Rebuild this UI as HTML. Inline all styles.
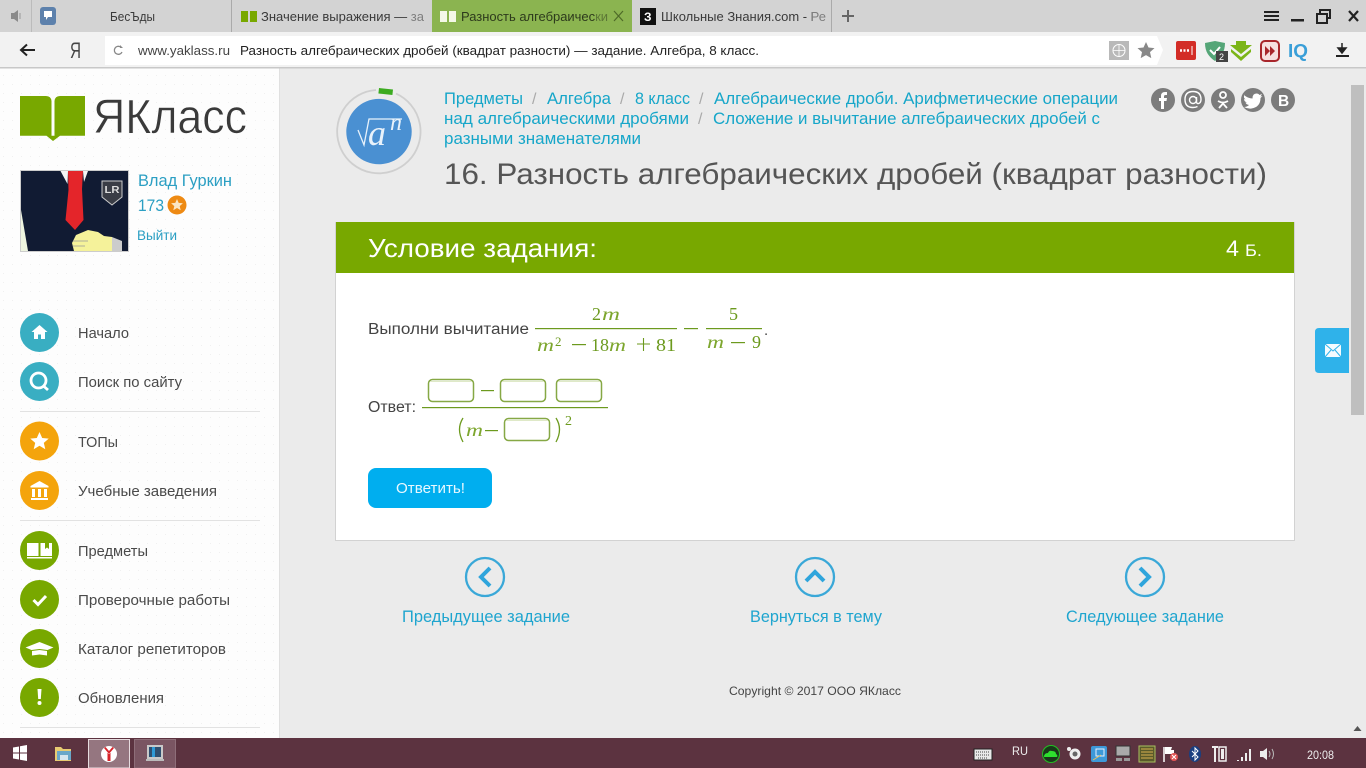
<!DOCTYPE html>
<html lang="ru"><head><meta charset="utf-8"><title>Разность алгебраических дробей</title>
<style>
html,body{margin:0;padding:0;width:1366px;height:768px;overflow:hidden;background:#ebebeb}
svg{display:block;position:absolute;left:0;top:0}
text{font-family:"Liberation Sans",sans-serif;white-space:pre}
.nav{font-size:14.5px;fill:#4a4a4a}
.bc{font-size:17px;fill:#16a6c9}
.tab{font-size:13px;fill:#3a3a3a}
.m{font-family:"Liberation Serif",serif;fill:#6c9a1e;font-size:18px}
.mi{font-family:"Liberation Serif",serif;fill:#7da62e;font-size:18px;font-style:italic}
.lnk{font-size:16.5px;fill:#1fa5cf}
</style></head><body>
<svg width="1366" height="768" viewBox="0 0 1366 768" xmlns="http://www.w3.org/2000/svg">
<defs>
<pattern id="dots" width="9" height="9" patternUnits="userSpaceOnUse"><rect width="9" height="9" fill="#fdfdfd"/><rect x="3" y="3" width="1" height="1" fill="#f0f0f0"/></pattern>
</defs>

<!-- page -->
<rect x="0" y="68" width="1366" height="670" fill="#ebebeb"/>
<rect x="0" y="68" width="279" height="670" fill="url(#dots)"/>
<rect x="279" y="68" width="1" height="670" fill="#e0e0e0"/>

<!-- tab bar -->
<rect x="0" y="0" width="1366" height="32" fill="#d3d3d3"/>
<path d="M11 13h3l4-3v12l-4-3h-3z" fill="#8a8a8a"/><path d="M20 13v6" stroke="#999" stroke-width="1"/>
<rect x="31" y="0" width="1" height="32" fill="#bbb"/>
<rect x="40" y="7" width="16" height="18" rx="3" fill="#5d81ac"/><path d="M44 11h8v6h-4l-2 3v-3h-2z" fill="#fff"/>
<text class="tab" x="110" y="21" textLength="45" lengthAdjust="spacingAndGlyphs">БесЪды</text>
<rect x="231" y="0" width="1" height="32" fill="#aaa"/>
<path d="M241 11h7v11h-7zM250 11h7v11h-7z" fill="#78a800"/>
<text class="tab" x="261" y="21" textLength="163" lengthAdjust="spacingAndGlyphs">Значение выражения — за</text>
<rect x="408" y="4" width="24" height="24" fill="#d3d3d3" opacity=".45"/>
<rect x="432" y="0" width="200" height="32" fill="#8bb450"/>
<path d="M440 11h7v11h-7zM449 11h7v11h-7z" fill="#f4f8e8"/>
<text class="tab" x="461" y="21" textLength="147" lengthAdjust="spacingAndGlyphs" style="fill:#2d3a1c">Разность алгебраически</text>
<rect x="596" y="4" width="12" height="24" fill="#8bb450" opacity=".5"/>
<path d="M614 11l9 10M623 11l-9 10" stroke="#4e6a28" stroke-width="1.200"/>
<rect x="640" y="8" width="16" height="17" fill="#111"/><text x="644" y="21" style="font-size:12px;font-weight:bold;fill:#fff">З</text>
<text class="tab" x="661" y="21" textLength="165" lengthAdjust="spacingAndGlyphs">Школьные Знания.com - Ре</text>
<rect x="812" y="4" width="18" height="24" fill="#d3d3d3" opacity=".45"/>
<rect x="831" y="0" width="1" height="32" fill="#aaa"/>
<path d="M848 10v12M842 16h12" stroke="#666" stroke-width="2"/>
<path d="M1264 12h15M1264 16h15M1264 20h15" stroke="#222" stroke-width="2"/>
<rect x="1291" y="19" width="13" height="2.500" fill="#222"/>
<rect x="1317" y="14" width="10" height="9" fill="none" stroke="#222" stroke-width="2"/><path d="M1320 13v-3h10v8h-3" fill="none" stroke="#222" stroke-width="2"/>
<path d="M1349 11l9 10M1358 11l-9 10" stroke="#222" stroke-width="2.200"/>

<!-- toolbar -->
<rect x="0" y="32" width="1366" height="35" fill="#f2f2f2"/>
<rect x="0" y="67" width="1366" height="1.500" fill="#c8c8c8"/>
<path d="M22 50h13M27 44.500l-6 5.500 6 5.500" fill="none" stroke="#222" stroke-width="2"/>
<text x="70" y="58" style="font-size:22px;fill:#444" textLength="11" lengthAdjust="spacingAndGlyphs">Я</text>
<path d="M105 36h1052l6 14-6 15H105z" fill="#fff"/>
<path d="M122 52a4 4 0 1 1-1.400-5" fill="none" stroke="#888" stroke-width="1.300"/><path d="M120 45v3h3" fill="#888"/>
<text x="138" y="55" style="font-size:13px;fill:#444" textLength="92" lengthAdjust="spacingAndGlyphs">www.yaklass.ru</text>
<text x="240" y="55" style="font-size:13px;fill:#222" textLength="519" lengthAdjust="spacingAndGlyphs">Разность алгебраических дробей (квадрат разности) — задание. Алгебра, 8 класс.</text>
<rect x="1109" y="41" width="20" height="19" fill="#b9b9b9"/><circle cx="1119" cy="50.500" r="6" fill="none" stroke="#fff"/><path d="M1113 50.500h12M1119 44.500v12" stroke="#fff" stroke-width=".8"/>
<path d="M1146 42l2.500 5.500 6 .6-4.500 4 1.300 6-5.300-3-5.300 3 1.300-6-4.500-4 6-.6z" fill="#888"/>
<rect x="1176" y="41" width="20" height="19" rx="2" fill="#d32d27"/><path d="M1180 50.500h9" stroke="#fff" stroke-width="2.500" stroke-dasharray="2 1.500"/><path d="M1192 46v9" stroke="#fff"/>
<path d="M1205 43l10-2 10 2c0 9-4 14-10 18-6-4-10-9-10-18z" fill="#55a678"/><path d="M1210 50l4 4 6-7" fill="none" stroke="#fff" stroke-width="2"/>
<rect x="1216" y="51" width="12" height="11" fill="#444"/><text x="1219" y="60" style="font-size:9px;fill:#fff">2</text>
<path d="M1236 41h10v4h6l-11 9-11-9h6z M1231 49l10 8 10-8v3l-10 9-10-9z" fill="#7cb518"/>
<rect x="1261" y="41" width="18" height="20" rx="4" fill="#f6dfe0" stroke="#a8262c" stroke-width="2"/><path d="M1265 46l5 5-5 5zM1270 46l5 5-5 5z" fill="#a8262c"/>
<text x="1288" y="57" style="font-size:18px;font-weight:bold;fill:#3a9fd8" textLength="20" lengthAdjust="spacingAndGlyphs">IQ</text>
<path d="M1342 43v7M1338 48l4 5 4-5z" fill="#222" stroke="#222" stroke-width="1.500"/><rect x="1336" y="55" width="13" height="2" fill="#222"/>

<!-- logo -->
<path d="M20 96H46q5 0 5.500 5V135.700H20zM85 96H60q-5 0-5.500 5V135.700H85zM46.500 135.700H60L53 141z" fill="#78a800"/>
<text x="93" y="133" style="font-size:48px;fill:#3a3a3a;stroke:#fdfdfd;stroke-width:.6px" textLength="154" lengthAdjust="spacingAndGlyphs">ЯКласс</text>

<!-- avatar -->
<rect x="20.500" y="170.500" width="108" height="81" fill="#111b33" stroke="#ccc"/>
<path d="M60.500 171H68l-.5 13zM83 171h5l-4 11z" fill="#f4f4f4"/>
<path d="M68 171h15l-1 18 1.500 31-8.500 10-9.500-10 3-30z" fill="#e4252a"/>
<path d="M21 210l7 41h-7z" fill="#eef5e0"/>
<path d="M72 243l4-8 12-5 10 2 6 4 8 1v14H74z" fill="#f5f29a"/>
<path d="M73 241h15M73 246h12" stroke="#999" stroke-width=".7"/>
<path d="M112 237l10 4v10h-10z" fill="#ccc"/>
<path d="M102 181h20v16l-10 8-10-8z" fill="#3a3d46" stroke="#ccc"/>
<text x="104.500" y="193" style="font-size:10px;font-weight:bold;fill:#ddd" textLength="15" lengthAdjust="spacingAndGlyphs">LR</text>

<text x="138" y="186" style="font-size:16.500px;fill:#2b9fc3" textLength="94" lengthAdjust="spacingAndGlyphs">Влад Гуркин</text>
<text x="138" y="211" style="font-size:16.500px;fill:#2b9fc3" textLength="26" lengthAdjust="spacingAndGlyphs">173</text>
<circle cx="177" cy="205" r="9.500" fill="#ee8a13"/><path d="M177 199l1.700 3.900 4.200.4-3.200 2.800 1 4.100-3.700-2.200-3.700 2.200 1-4.100-3.200-2.800 4.200-.4z" fill="#fbe6c4"/>
<text x="137" y="240" style="font-size:13.500px;fill:#2b9fc3" textLength="40" lengthAdjust="spacingAndGlyphs">Выйти</text>

<!-- nav -->
<circle cx="39.500" cy="332.500" r="19.500" fill="#39aec2"/>
<path d="M39.500 325l-8 7h2.500v7h4v-4.500h3v4.500h4v-7h2.500z" fill="#fff"/>
<text class="nav" x="78" y="338" textLength="51" lengthAdjust="spacingAndGlyphs">Начало</text>
<circle cx="39.500" cy="381.500" r="19.500" fill="#39aec2"/>
<circle cx="38.500" cy="380.500" r="7.500" fill="none" stroke="#fff" stroke-width="2.800"/><path d="M43.500 386l4.500 4" stroke="#fff" stroke-width="2.800"/>
<text class="nav" x="78" y="387" textLength="104" lengthAdjust="spacingAndGlyphs">Поиск по сайту</text>
<rect x="20" y="411" width="240" height="1" fill="#e2e2e2"/>
<circle cx="39.500" cy="441" r="19.500" fill="#f4a40c"/>
<path d="M39.500 432l2.700 6 6.500.6-4.900 4.300 1.500 6.300-5.800-3.400-5.800 3.400 1.500-6.300-4.900-4.300 6.500-.6z" fill="#fff"/>
<text class="nav" x="78" y="447" textLength="40" lengthAdjust="spacingAndGlyphs">ТОПы</text>
<circle cx="39.500" cy="490.500" r="19.500" fill="#f4a40c"/>
<path d="M39.500 481l-9 5v1.500h18V486z M32 489h3v8h-3zM38 489h3v8h-3zM44 489h3v8h-3zM31 498h17v2H31z" fill="#fff"/>
<text class="nav" x="78" y="496" textLength="139" lengthAdjust="spacingAndGlyphs">Учебные заведения</text>
<rect x="20" y="520" width="240" height="1" fill="#e2e2e2"/>
<circle cx="39.500" cy="550.500" r="19.500" fill="#78a800"/>
<path d="M27 543h11.500v13H27zM40.500 543H52v13H40.500z M27 557h25v1.500H27z" fill="#fff"/><path d="M45 543h4v6l-2-1.500-2 1.500z" fill="#78a800"/>
<text class="nav" x="78" y="556" textLength="70" lengthAdjust="spacingAndGlyphs">Предметы</text>
<circle cx="39.500" cy="599.500" r="19.500" fill="#78a800"/>
<path d="M33.500 600l4.500 4.500 8-8.500" fill="none" stroke="#fff" stroke-width="3"/>
<text class="nav" x="78" y="605" textLength="152" lengthAdjust="spacingAndGlyphs">Проверочные работы</text>
<circle cx="39.500" cy="648.500" r="19.500" fill="#78a800"/>
<path d="M39.500 642l-14 5.500 6 2.500 8-1 8 1 6-2.500z M32 651l7.500-1 7.500 1v4.500l-7.500-1-7.500 1z" fill="#fff"/>
<text class="nav" x="78" y="654" textLength="148" lengthAdjust="spacingAndGlyphs">Каталог репетиторов</text>
<circle cx="39.500" cy="697.500" r="19.500" fill="#78a800"/>
<path d="M37.500 689h4l-.7 10h-2.600z" fill="#fff"/><circle cx="39.500" cy="703" r="2" fill="#fff"/>
<text class="nav" x="78" y="703" textLength="86" lengthAdjust="spacingAndGlyphs">Обновления</text>
<rect x="20" y="727" width="240" height="1" fill="#e2e2e2"/>

<!-- course icon -->
<path d="M396 93.600A41.700 41.700 0 1 1 376 90" fill="none" stroke="#cfcfcf" stroke-width="1.800"/>
<circle cx="379" cy="131.600" r="32.700" fill="#4a90d2"/>
<path d="M379 88l14 1.500-.6 5.500-14-1.500z" fill="#3cab20"/>
<text x="368" y="145" style="font-family:'Liberation Serif',serif;font-size:36px;fill:#e8f2fb;font-style:italic">a</text>
<text x="390" y="130" style="font-family:'Liberation Serif',serif;font-size:24px;fill:#e8f2fb;font-style:italic">n</text>
<path d="M358 130l6 15 5-26h33" fill="none" stroke="#e8f2fb" stroke-width="1.300"/>

<!-- breadcrumbs -->
<text class="bc" x="444" y="104" textLength="79" lengthAdjust="spacingAndGlyphs">Предметы</text>
<text x="532" y="104" style="font-size:16px;fill:#aaa">/</text>
<text class="bc" x="547" y="104" textLength="64" lengthAdjust="spacingAndGlyphs">Алгебра</text>
<text x="620" y="104" style="font-size:16px;fill:#aaa">/</text>
<text class="bc" x="635" y="104" textLength="55" lengthAdjust="spacingAndGlyphs">8 класс</text>
<text x="699" y="104" style="font-size:16px;fill:#aaa">/</text>
<text class="bc" x="714" y="104" textLength="404" lengthAdjust="spacingAndGlyphs">Алгебраические дроби. Арифметические операции</text>
<text class="bc" x="444" y="124" textLength="245" lengthAdjust="spacingAndGlyphs">над алгебраическими дробями</text>
<text x="698" y="124" style="font-size:16px;fill:#aaa">/</text>
<text class="bc" x="713" y="124" textLength="387" lengthAdjust="spacingAndGlyphs">Сложение и вычитание алгебраических дробей с</text>
<text class="bc" x="444" y="144" textLength="197" lengthAdjust="spacingAndGlyphs">разными знаменателями</text>
<text x="444" y="184" style="font-size:30px;fill:#555" textLength="823" lengthAdjust="spacingAndGlyphs">16. Разность алгебраических дробей (квадрат разности)</text>

<!-- socials -->
<circle cx="1163" cy="100" r="12" fill="#7c7c7c"/><circle cx="1193" cy="100" r="12" fill="#7c7c7c"/><circle cx="1223" cy="100" r="12" fill="#7c7c7c"/><circle cx="1253" cy="100" r="12" fill="#7c7c7c"/><circle cx="1283" cy="100" r="12" fill="#7c7c7c"/>
<path d="M1161 109v-8h-2v-3h2v-2q0-4 4-4h2v3h-1.500q-1.500 0-1.500 1.500V98h3l-.5 3H1164v8z" fill="#fff"/>
<circle cx="1193" cy="100" r="3.500" fill="none" stroke="#fff" stroke-width="1.400"/><path d="M1196.500 97v4.500q0 2.500 2.200 2 2.300-.8 2.300-4 0-8-8-8t-8 8 8 8q2.500 0 4.500-1" fill="none" stroke="#fff" stroke-width="1.400"/>
<circle cx="1223" cy="95" r="3" fill="none" stroke="#fff" stroke-width="1.800"/><path d="M1218 101q5 3 10 0M1223 102.500v1M1223 103.500l-4 4.500M1223 103.500l4 4.500" fill="none" stroke="#fff" stroke-width="1.800"/>
<path d="M1244 95q4 3.500 8.500 3.500 0-5 4-5 2 0 3 1.500l2.500-1-1.500 2.500 2-.5-2 2q0 9-9 10.500-4 .5-7.500-1.500 3 0 5-2-3-.5-3.500-2.500h1.500q-3-1-3-3.500l1.500.5q-2.500-2-1-5z" fill="#fff"/>
<text x="1278" y="106" style="font-size:15.500px;font-weight:bold;fill:#fff">В</text>

<!-- card -->
<rect x="335.500" y="222.500" width="959" height="318" fill="#fff" stroke="#d2d2d2"/>
<rect x="336" y="222" width="958" height="51" fill="#78a800"/>
<text x="368" y="257" style="font-size:26px;fill:#fff" textLength="229" lengthAdjust="spacingAndGlyphs">Условие задания:</text>
<text x="1226" y="256" style="font-size:22px;fill:#fff" textLength="13" lengthAdjust="spacingAndGlyphs">4</text>
<text x="1245" y="256" style="font-size:17px;fill:#fff" textLength="17" lengthAdjust="spacingAndGlyphs">Б.</text>

<!-- math -->
<text x="368" y="334" style="font-size:15.500px;fill:#444" textLength="161" lengthAdjust="spacingAndGlyphs">Выполни вычитание</text>
<text class="m" x="592" y="320">2</text><text class="mi" x="602" y="320" textLength="18" lengthAdjust="spacingAndGlyphs">m</text>
<rect x="535" y="328" width="142" height="1.200" fill="#6c9a1e"/>
<text class="mi" x="537" y="351" textLength="17" lengthAdjust="spacingAndGlyphs">m</text>
<text class="m" x="555" y="346" style="font-size:13px">2</text>
<rect x="572" y="344" width="14" height="1.200" fill="#6c9a1e"/>
<text class="m" x="591" y="351">18</text>
<text class="mi" x="609" y="351" textLength="17" lengthAdjust="spacingAndGlyphs">m</text>
<path d="M637 344h13M643.500 338v13" stroke="#6c9a1e" stroke-width="1.100"/>
<text class="m" x="656" y="351" textLength="20" lengthAdjust="spacingAndGlyphs">81</text>
<rect x="684" y="328" width="14" height="1.200" fill="#6c9a1e"/>
<text class="m" x="729" y="320">5</text>
<rect x="706" y="328" width="56" height="1.200" fill="#6c9a1e"/>
<text class="mi" x="707" y="348" textLength="17" lengthAdjust="spacingAndGlyphs">m</text>
<rect x="731" y="342" width="14" height="1.200" fill="#6c9a1e"/>
<text class="m" x="752" y="348">9</text>
<text x="764" y="335" style="font-size:15px;fill:#444">.</text>

<text x="368" y="412" style="font-size:15.500px;fill:#444" textLength="48" lengthAdjust="spacingAndGlyphs">Ответ:</text>
<g fill="#fff" stroke="#86a845" stroke-width="1.500">
<rect x="428.500" y="379.500" width="45" height="22" rx="4"/>
<rect x="500.500" y="379.500" width="45" height="22" rx="4"/>
<rect x="556.500" y="379.500" width="45" height="22" rx="4"/>
<rect x="504.500" y="418.500" width="45" height="22" rx="4"/>
</g>
<g fill="none" stroke="#dfe9c8" stroke-width="1">
<path d="M430 381.500h42M502 381.500h42M558 381.500h42M506 420.500h42"/>
</g>
<rect x="481" y="390" width="13" height="1.200" fill="#6c9a1e"/>
<rect x="422" y="407" width="186" height="1.200" fill="#6c9a1e"/>
<path d="M463 418q-7 11 0 24" fill="none" stroke="#6c9a1e" stroke-width="1.300"/>
<text class="mi" x="466" y="436" textLength="17" lengthAdjust="spacingAndGlyphs">m</text>
<rect x="485" y="430" width="13" height="1.200" fill="#6c9a1e"/>
<path d="M556 418q7 11 0 24" fill="none" stroke="#6c9a1e" stroke-width="1.300"/>
<text class="m" x="565" y="425" style="font-size:14px">2</text>

<!-- button -->
<rect x="368" y="468" width="124" height="40" rx="8" fill="#00aeef"/>
<text x="396" y="493" style="font-size:14.500px;fill:#e8f8ff" textLength="69" lengthAdjust="spacingAndGlyphs">Ответить!</text>

<!-- prev/next -->
<g fill="none" stroke="#3aa8d8" stroke-width="2.300">
<circle cx="485" cy="577" r="19"/><circle cx="815" cy="577" r="19"/><circle cx="1145" cy="577" r="19"/>
</g>
<g fill="none" stroke="#2fa5dc" stroke-width="4">
<path d="M490 568l-9 9 9 9"/><path d="M806 581l9-9 9 9"/><path d="M1140 568l9 9-9 9"/>
</g>
<text class="lnk" x="402" y="622" textLength="168" lengthAdjust="spacingAndGlyphs">Предыдущее задание</text>
<text class="lnk" x="750" y="622" textLength="132" lengthAdjust="spacingAndGlyphs">Вернуться в тему</text>
<text class="lnk" x="1066" y="622" textLength="158" lengthAdjust="spacingAndGlyphs">Следующее задание</text>
<text x="729" y="695" style="font-size:12px;fill:#444" textLength="172" lengthAdjust="spacingAndGlyphs">Copyright © 2017 ООО ЯКласс</text>

<!-- mail tab -->
<path d="M1349 328h-30q-4 0-4 4v37q0 4 4 4h30z" fill="#2fb2ea"/>
<rect x="1325" y="344" width="16" height="13" fill="#f4fbff"/><path d="M1325 344l8 7 8-7M1325 357l6-7M1341 357l-6-7" fill="none" stroke="#2fb2ea" stroke-width="1"/>

<!-- scrollbar -->
<rect x="1351" y="85" width="13" height="330" fill="#bfbfbf"/>
<path d="M1357.500 726l-4 5h8z" fill="#555"/>

<!-- taskbar -->
<rect x="0" y="738" width="1366" height="30" fill="#5c3340"/>
<path d="M13 747.500l6-1v6h-6zM20 746.300l7-1.300v7.500h-7zM13 753.500h6v6l-6-1zM20 753.500h7v7.500l-7-1.300z" fill="#fff"/>
<path d="M55 747h6l2 2h8v12H55z" fill="#e8cb72"/><rect x="57" y="751" width="14" height="9" fill="#6aa7c9"/><rect x="60" y="755" width="8" height="5" fill="#d7e6ef"/>
<rect x="88.500" y="739.500" width="41" height="28.500" fill="#957680" stroke="#e6dcdf"/>
<circle cx="109" cy="754" r="8" fill="#fff"/><path d="M104 748l5 6 5-6-1.500-1-3.500 4-3.500-4zM107.500 753h3v8h-3z" fill="#d8232a"/>
<rect x="134.500" y="739.500" width="41" height="28.500" fill="#7a5562" stroke="#8e6e79"/>
<rect x="147" y="745" width="16" height="14" fill="#c9c9c9"/><rect x="149" y="747" width="12" height="10" fill="#2f4f6f"/><rect x="152" y="747" width="3" height="10" fill="#2e9ad6"/><rect x="146" y="759" width="18" height="2" fill="#bbb"/>

<!-- tray -->
<rect x="974" y="749" width="18" height="11" fill="#e8e8e8" stroke="#222"/><path d="M976 752h14M976 755h14M978 758h10" stroke="#444" stroke-dasharray="1 1"/>
<text x="1012" y="755" style="font-size:12px;fill:#eee" textLength="16" lengthAdjust="spacingAndGlyphs">RU</text>
<circle cx="1051" cy="754" r="8.500" fill="#1a3a1a" stroke="#22c022"/><path d="M1044 757q0-4 4-4 1-3 4-2 4 0 4 3 2 1 1 3z" fill="#2ee02e"/>
<circle cx="1075" cy="754" r="5.500" fill="#eee"/><circle cx="1075" cy="754" r="2.500" fill="#666"/><circle cx="1069" cy="749" r="2" fill="#eee"/>
<rect x="1091" y="746" width="16" height="16" rx="2" fill="#3d98d8"/><path d="M1096 749h8v7h-8z" fill="none" stroke="#e8f0ff"/><path d="M1093 760l8-5" stroke="#eac05c"/>
<rect x="1116" y="746" width="14" height="10" fill="#aaa" stroke="#333"/><rect x="1116" y="758" width="6" height="3" fill="#999"/><rect x="1124" y="758" width="6" height="3" fill="#999"/>
<rect x="1139" y="746" width="16" height="16" fill="#5a5a2a" stroke="#aac060"/><path d="M1141 749h12M1141 752h12M1141 755h12M1141 758h12" stroke="#d8b050"/>
<path d="M1164 747v15" stroke="#fff" stroke-width="1.500"/><path d="M1165 747h7l-1 3h3v4h-9z" fill="#fff"/><circle cx="1174" cy="757" r="4" fill="#e25555"/><path d="M1172 755l4 4M1176 755l-4 4" stroke="#fff"/>
<ellipse cx="1195" cy="754" rx="6" ry="8" fill="#1a3f80"/><path d="M1192 751l6 6-3 3v-12l3 3-6 6" fill="none" stroke="#fff"/>
<path d="M1212 747h6M1215 747v15" stroke="#eee" stroke-width="2"/><rect x="1219" y="747" width="7" height="14" fill="none" stroke="#eee" stroke-width="1.500"/><rect x="1221" y="749" width="3" height="10" fill="#eee"/>
<path d="M1237 760h2v1h-2zM1241 757h2v4h-2zM1245 753h2v8h-2zM1249 749h2v12h-2z" fill="#eee"/>
<path d="M1260 751h3l4-3v12l-4-3h-3z" fill="#eee"/><path d="M1269 751q2 3 0 6M1272 749q3 5 0 10" fill="none" stroke="#bbb"/>
<text x="1307" y="759" style="font-size:12px;fill:#eee" textLength="27" lengthAdjust="spacingAndGlyphs">20:08</text>
</svg>
</body></html>
